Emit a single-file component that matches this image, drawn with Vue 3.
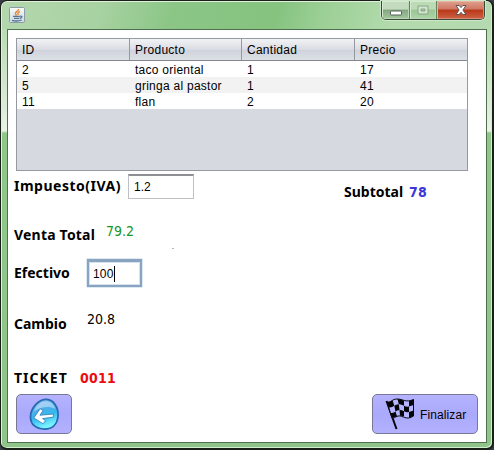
<script setup>
const headers = ['ID', 'Producto', 'Cantidad', 'Precio']
const rows = [
  ['2', 'taco oriental', '1', '17'],
  ['5', 'gringa al pastor', '1', '41'],
  ['11', 'flan', '2', '20'],
]
</script>

<template>
  <div class="window">
    <header class="titlebar">
      <svg class="java" viewBox="0 0 16 16">
        <defs>
          <linearGradient id="tile" x1="0" y1="0" x2="0" y2="1">
            <stop offset="0" stop-color="#f8fafa" /><stop offset="1" stop-color="#cbd8e4" />
          </linearGradient>
        </defs>
        <rect x=".5" y=".5" width="15" height="15" rx="1" fill="url(#tile)" stroke="#8b9ba7" />
        <path d="M9.6 2C10 4.200 5.200 4.800 6.600 7.200L7.600 8.500M11 4.500C8.500 5.500 8.600 6.500 9.300 8" fill="none" stroke="#e58a3c" stroke-width="1.500" />
        <path d="M4 9.400H10.800M5 11.300H10.200M3 13.300Q8 14.800 12.600 13M11 9.200Q14 8.800 12.300 10.600L10.800 11.300" fill="none" stroke="#55758f" stroke-width="1.300" />
      </svg>
      <div class="controls">
        <span class="ctl min"><svg viewBox="0 0 14 8"><rect x="1.500" y="2" width="11" height="4" rx=".5" fill="#fff" stroke="#53605a" /></svg></span>
        <span class="ctl max"><svg viewBox="0 0 14 10"><path d="M2 1H12V9H2Z M5 4V6H9V4Z" fill="#d2e6ce" fill-rule="evenodd" stroke="#87a486" /></svg></span>
        <span class="ctl close"><svg viewBox="0 0 14 12"><path d="M2 1.500H5.200L7 3.600L8.800 1.500H12L8.900 6L12 10.500H8.800L7 8.300L5.200 10.500H2L5.100 6Z" fill="#fff" stroke="#5c5355" /></svg></span>
      </div>
    </header>
    <main class="content">
      <div class="table">
        <div class="tr head"><span v-for="h in headers" :key="h">{{ h }}</span></div>
        <div v-for="r in rows" :key="r[0]" class="tr body"><span v-for="(c, i) in r" :key="i">{{ c }}</span></div>
      </div>
      <div class="row tax">
        <span class="label w-tax">Impuesto(IVA)</span>
        <div class="field">1.2</div>
        <div class="sub"><span class="label w-sub">Subtotal</span><span class="label figure blue">78</span></div>
      </div>
      <div class="row total">
        <span class="label w-total">Venta Total</span><span class="value green">79.2</span><i class="speck"></i>
      </div>
      <div class="row cash">
        <span class="label w-cash">Efectivo</span>
        <div class="field focus">100<i class="caret"></i></div>
      </div>
      <div class="row change"><span class="label w-change">Cambio</span><span class="value">20.8</span></div>
      <div class="row ticket"><span class="label w-ticket">TICKET</span><span class="label figure red">0011</span></div>
      <footer class="actions">
        <button class="btn back">
          <svg viewBox="0 0 32 34">
            <defs>
              <linearGradient id="egg" x1="0" y1="0" x2=".3" y2="1">
                <stop offset="0" stop-color="#9bc6ee" /><stop offset=".42" stop-color="#4baee9" /><stop offset=".65" stop-color="#35b8ef" /><stop offset="1" stop-color="#79f4ff" />
              </linearGradient>
            </defs>
            <path d="M18.500 1.500C25 2 30.500 9 30 18C29.500 27 24 32 16 32C7 32 1.500 27 1.500 19.500C1.500 11 9.500 1 18.500 1.500Z" fill="url(#egg)" stroke="#2868b4" stroke-width="1.800" />
            <path d="M5 14C8 6 14 3 19 3.500C23 4 26 7 27 11C20 8 12 9 5 14Z" fill="#d3e5fb" opacity=".55" />
            <path d="M5 20.500L11.500 11L14.500 12.800L11.300 17.800L25 16.500L25.200 19.700L14 21.200L17 23.500L14.500 26.500Z" fill="#fff" stroke="#2c79b7" stroke-width=".8" stroke-linejoin="round" />
          </svg>
        </button>
        <button class="btn finish">
          <svg viewBox="0 0 30 32">
            <path d="M1.500 3L11.500 31" stroke="#050508" stroke-width="2" />
            <path d="M2 4C6 5 7 1 12 1C18 1 21 5 28.500 1.500L28.500 18C21 23 18 17 13 18C10 18.500 9 21 7 20Z" fill="#b6b5ff" stroke="#050508" />
            <path d="M2 4Q5 4.500 7.500 2.300L9.300 7.800Q6.500 10 4 9.500ZM12.500 1Q16 1 19 2.800V7.800Q16 6 13.800 6.300ZM24 3.300L28.500 1.500V7L24 8.500ZM9.300 7.800Q11 6.300 13.800 6.300L14.500 12Q12 12 10.500 13.500ZM19 7.800Q21.500 9 24 8.500V14Q21.500 14.500 19 13.300ZM14.500 12Q17 12 19 13.300V18.500Q17 17.500 15 17.800ZM24 14L28.500 12.500V18L24 19.800ZM5.500 15Q8 15.300 10.500 13.500L12 18.300L7 20.300Z" fill="#050508" />
          </svg>
          <span>Finalizar</span>
        </button>
      </footer>
    </main>
  </div>
</template>

<style>
body { margin: 0; background: #383c48; overflow: hidden; }
</style>

<style scoped>
* { box-sizing: border-box; }
.window {
  width: 494px; height: 450px; padding: 1px 6px 6px;
  border: 1px solid #182018; border-right-width: 2px; border-bottom-width: 2px; border-radius: 7px;
  box-shadow: inset 1px 1px #e0f0dd, inset -1px -1px #d3edcf;
  background: linear-gradient(to bottom, #b9dcb4 0, #b9dcb4 29px, #d9ead5 100px, #e9f3e6 130px, #8fc78a 132px, #8fc48b 100%);
  font-family: "Liberation Sans", Arial, sans-serif; font-size: 12px; color: #000;
}
.titlebar {
  height: 27px; margin: 0 -5px; padding: 0 6px 0 7px; display: flex; justify-content: space-between; align-items: flex-start;
  background: linear-gradient(105deg, #b4d7ae 0, #a8d2a2 20%, #8bc686 35%, #85c37f 56%, #9bcf95 65%, #b3dbad 80%, #b5d9b0 100%);
  border-radius: 5px 5px 0 0;
}
.java { width: 16px; height: 16px; margin-top: 5px; }
.controls { display: flex; width: 104px; height: 19px; margin-top: -1px; border: 1px solid #394a39; border-top: 0; border-radius: 0 0 5px 5px; overflow: hidden; box-shadow: 0 0 0 1px #cce8c9; }
.ctl { display: flex; justify-content: center; align-items: center; border-right: 1px solid #66825f; box-shadow: inset 1px 1px #d5ead1, inset -1px -1px #bad7b5; background: linear-gradient(#c4dbbf 0 45%, #83a67e 50%, #a5ca9f); }
.min { width: 28px; }
.max { width: 27px; background: linear-gradient(#bbdbb5 0 45%, #9bc695 50%, #aed5a8); }
.close { flex: 1; border: 0; box-shadow: inset 1px 1px #e9b4a3, inset -1px -1px #d88c78; background: linear-gradient(#dfa18e 0, #cf7762 45%, #b83719 50%, #cf6345); }
.min svg { width: 14px; height: 8px; margin-top: 5px; }
.max svg { width: 14px; height: 10px; }
.close svg { width: 14px; height: 12px; }
.content { width: 480px; height: 414px; border: 1px solid #4f704d; background: #fff; padding: 8px 0 0 6px; }
.table { width: 452px; height: 133px; margin-left: 2px; border: 1px solid #9799a1; background: #d6d9e0; letter-spacing: .26px; }
.tr { display: grid; grid-template-columns: 113px 112px 113px 1fr; }
.tr span { padding-left: 5px; }
.head { height: 22px; line-height: 23px; border-bottom: 1px solid #85878e; background: linear-gradient(#f2f3f5, #d9dce3 50%, #cfd2da 51%, #dce0e7); }
.head span { height: 21px; border-right: 1px solid #9698a0; }
.head span:last-child { border-right: 0; }
.body { height: 16px; line-height: 18px; background: #fff; }
.body:nth-child(3) { background: #f2f2f2; }
.row { display: flex; align-items: flex-start; }
.label { font: bold 14px/18px "Noto Sans", sans-serif; white-space: nowrap; flex: none; }
.value, .label.figure { font-family: "DejaVu Sans Condensed", "DejaVu Sans", sans-serif; font-stretch: condensed; }
.value { font-size: 14px; line-height: 18px; }
.figure { letter-spacing: .25px; }
.tax { height: 53px; padding-top: 3px; }
.tax > .label { padding-top: 3px; }
.w-tax { width: 114px; letter-spacing: .5px; }
.field { width: 66px; height: 25px; padding-left: 5px; border: 1px solid #bfc0c3; border-top: 2px solid #8d8f94; line-height: 23px; background: #fff; }
.sub { display: flex; margin-left: 150px; padding-top: 9px; }
.w-sub { width: 65px; }
.blue { color: #3b37d8; }
.total { height: 35px; }
.total .label { padding-top: 2px; }
.total .value { margin-top: -2px; }
.w-total { width: 92px; letter-spacing: .2px; }
.green { color: #159522; }
.speck { width: 2px; height: 1px; background: #b5b5b5; margin: 24px 0 0 38px; }
.cash { height: 54px; }
.cash .label { padding-top: 5px; }
.w-cash { width: 73px; }
.focus { display: flex; align-items: center; width: 55px; height: 28px; padding-top: 1px; padding-left: 4px; letter-spacing: .2px; border: 2px solid #88a4c0; border-top-width: 3px; box-shadow: inset 0 0 0 1px #d5e2ee, 0 0 0 .5px #bed5e8; }
.caret { width: 1px; height: 16px; background: #000; }
.change { height: 55px; }
.change .label { padding-top: 2px; }
.change .value { margin-top: -3px; }
.w-change { width: 73px; }
.ticket { height: 26px; }
.ticket .label { padding-top: 1px; }
.w-ticket { width: 66px; letter-spacing: 1px; }
.red { color: #ed0b0f; }
.actions { display: flex; justify-content: space-between; padding: 0 8px 0 2px; }
.btn { height: 40px; border: 1px solid #777796; border-radius: 5px; padding: 0; display: flex; align-items: center; background: linear-gradient(#b5b3ff, #aaa9fb 50%, #b3b1ff); font: 12px "Liberation Sans", Arial, sans-serif; color: #000; }
.back { width: 56px; justify-content: center; }
.back svg { width: 31px; height: 33px; }
.finish { width: 106px; padding-left: 12px; }
.finish svg { width: 30px; height: 32px; }
.finish span { margin: 2px 0 0 5px; letter-spacing: .1px; }
</style>
